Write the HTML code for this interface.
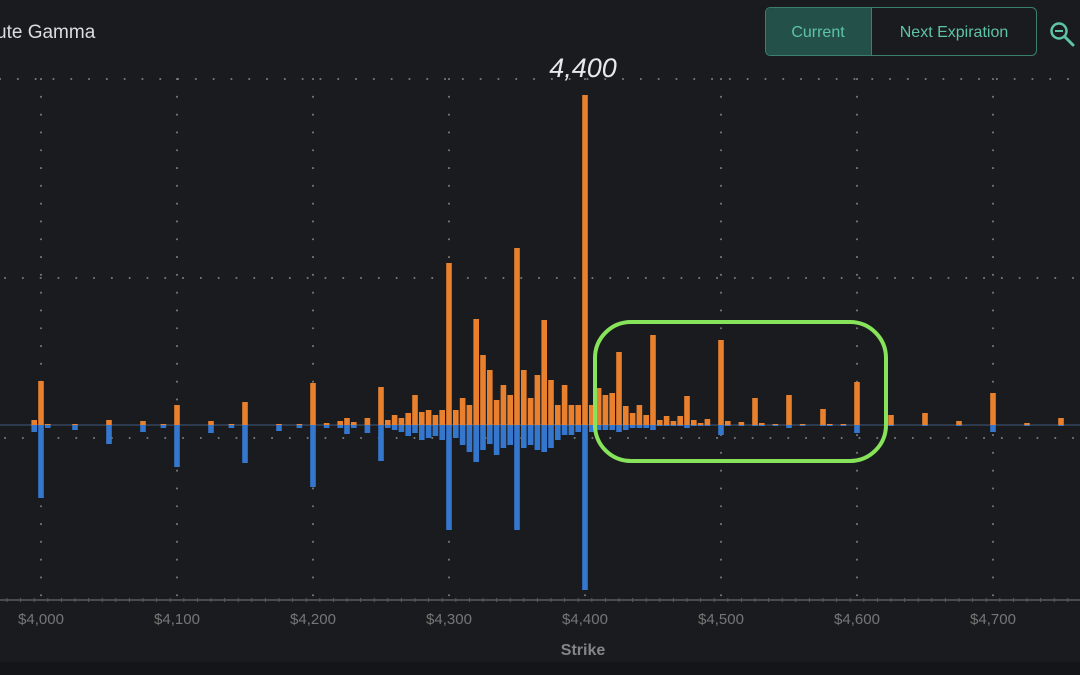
<!DOCTYPE html>
<html><head><meta charset="utf-8"><style>
html,body{margin:0;padding:0;background:#1a1b1f;width:1080px;height:675px;overflow:hidden;font-family:"Liberation Sans",sans-serif}
</style></head><body>
<svg id="s" width="1080" height="675" xmlns="http://www.w3.org/2000/svg" style="position:absolute;left:0;top:0">
<rect x="0" y="0" width="1080" height="675" fill="#1a1b1f"/>
<rect x="0" y="662" width="1080" height="13" fill="#141518"/>
<g id="grid" stroke="#7a7a7a" stroke-width="2" stroke-linecap="round" stroke-dasharray="0.1 17.7">
<line x1="0" y1="79" x2="1080" y2="79"/>
<line x1="5" y1="278" x2="1080" y2="278"/>
<line x1="5" y1="438" x2="1080" y2="438"/>
</g>
<g id="bars"></g>
<line x1="0" y1="600" x2="1080" y2="600" stroke="#4a4b4f" stroke-width="2"/>
<g id="ticks"></g>
<rect x="595" y="322" width="291" height="139" rx="36" fill="none" stroke="#86e35a" stroke-width="4"/>
<text x="-4" y="38" font-size="19" fill="#dddddd">ute Gamma</text>
<text x="583" y="77" font-size="27" font-style="italic" fill="#e8e8e8" text-anchor="middle">4,400</text>
<rect x="765.5" y="7.5" width="271" height="48" rx="5" fill="#1a1b1f" stroke="#3a7f70"/>
<path d="M871 8 H771 a5 5 0 0 0 -5 5 V50 a5 5 0 0 0 5 5 H871 Z" fill="#24504a"/>
<line x1="871.5" y1="8" x2="871.5" y2="55" stroke="#3a7f70"/>
<text x="818" y="37" font-size="16" fill="#5ec4a6" text-anchor="middle">Current</text>
<text x="954" y="37" font-size="16" fill="#5ec4a6" text-anchor="middle">Next Expiration</text>
<circle cx="1059" cy="31" r="7.5" fill="none" stroke="#5ec4a6" stroke-width="2.5"/>
<line x1="1055" y1="31" x2="1063" y2="31" stroke="#5ec4a6" stroke-width="2"/>
<line x1="1065" y1="37" x2="1073" y2="45" stroke="#5ec4a6" stroke-width="3" stroke-linecap="round"/>
<g id="labels" font-size="15" fill="#767676" text-anchor="middle"></g>
<text x="583" y="655" font-size="16" font-weight="bold" fill="#858585" text-anchor="middle">Strike</text>
</svg>
<script>
var NS="http://www.w3.org/2000/svg";
function el(t,a,p){var e=document.createElementNS(NS,t);for(var k in a)e.setAttribute(k,a[k]);document.getElementById(p).appendChild(e);return e;}
for(var i=0;i<8;i++){var x=41+136*i;el('line',{x1:x,y1:79,x2:x,y2:598},'grid');}
var X=function(s){return 41+(s-4000)*1.36;};
var Z=425;
var data={3995:[420,432],4000:[381,498],4005:[424,428],4025:[424,430],4050:[420,444],4075:[421,432],4090:[424,428],4100:[405,467],4125:[421,433],4140:[424,428],4150:[402,463],4175:[424,431],4190:[424,428],4200:[383,487],4210:[423,428],4220:[421,428],4225:[418,434],4230:[422,428],4240:[418,433],4250:[387,461],
4255:[420,428],4260:[415,430],4265:[418,432],4270:[413,436],4275:[395,433],4280:[412,440],4285:[410,438],4290:[415,436],4295:[410,440],4300:[263,530],4305:[410,438],4310:[398,445],4315:[405,452],4320:[319,462],4325:[355,450],4330:[370,444],4335:[400,455],4340:[385,448],4345:[395,445],4350:[248,530],4355:[370,448],4360:[398,445],4365:[375,450],4370:[320,452],4375:[380,448],4380:[405,440],4385:[385,435],4390:[405,435],4395:[405,432],4400:[95,590],
4405:[405,432],4410:[388,430],4415:[395,430],4420:[393,430],4425:[352,432],4430:[406,430],4435:[413,428],4440:[405,428],4445:[415,428],4450:[335,430],4455:[420,426],4460:[416,426],4465:[421,426],4470:[416,426],4475:[396,428],4480:[420,426],4485:[423,426],4490:[419,426],4500:[340,435],4505:[421,426],4515:[422,426],4525:[398,426],4530:[423,426],4540:[424,426],4550:[395,428],4560:[424,426],4575:[409,426],4580:[424,426],4590:[424,426],4600:[382,433],4625:[415,426],4650:[413,426],4675:[421,426],4700:[393,432],4725:[423,426],4750:[418,426]};
el('line',{x1:0,y1:Z,x2:1080,y2:Z,stroke:'#34455e','stroke-width':1.5},'bars');
for(var s in data){var x=X(+s)-2.8,d=data[s];
el('rect',{x:x,y:d[0],width:5.6,height:Z-d[0],fill:'#e8802e'},'bars');
el('rect',{x:x,y:Z,width:5.6,height:d[1]-Z,fill:'#3577cc'},'bars');}
for(var s=3975;s<=4775;s+=10){var x=X(s);var big=(s%100==0);
el('line',{x1:x,y1:big?597:598,x2:x,y2:big?607:602,stroke:'#5a5b5f','stroke-width':1},'ticks');}
for(var i=0;i<8;i++){var t=el('text',{x:41+136*i,y:624},'labels');t.textContent='$4,'+(i*100).toString().padStart(3,'0');}
</script>
</body></html>
